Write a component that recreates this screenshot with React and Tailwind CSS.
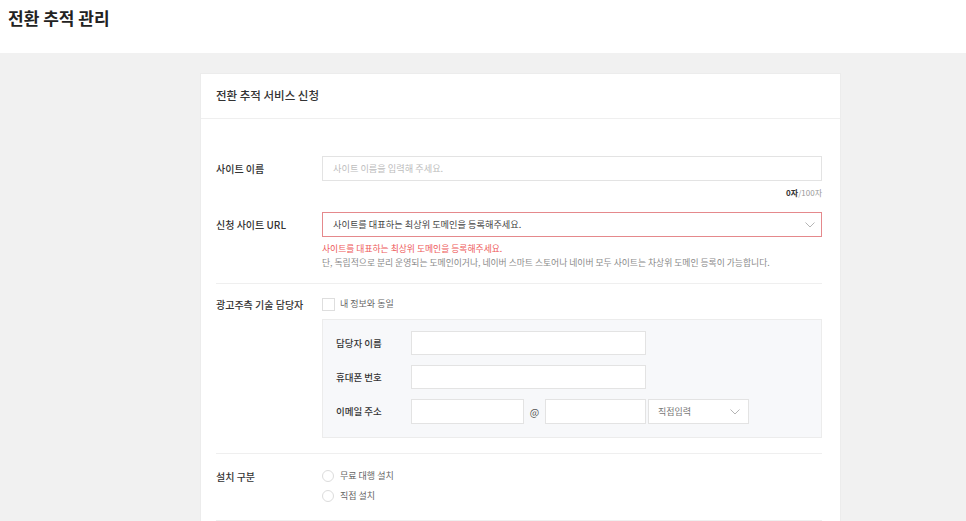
import React from "react";

const font = { fontFamily: '"Noto Sans CJK KR", "Noto Sans", sans-serif' };

function Chevron({ className = "" }) {
  return (
    <svg width="10" height="6" viewBox="0 0 10 6" className={className}>
      <polyline points="0.5,0.5 5,5 9.5,0.5" fill="none" stroke="#b5b5b5" strokeWidth="1" />
    </svg>
  );
}

function Label({ children }) {
  return (
    <div className="w-[106px] shrink-0 text-[10px] font-medium text-[#333]">{children}</div>
  );
}

function Radio({ children }) {
  return (
    <div className="flex h-[20px] items-center">
      <span className="mr-[6px] h-[12px] w-[12px] rounded-full border border-[#dcdcdc] bg-white" />
      <span className="text-[9px] text-[#666]">{children}</span>
    </div>
  );
}

export default function App() {
  return (
    <div className="min-h-[521px] bg-[#f1f1f1]" style={font}>
      <header className="h-[53px] bg-white pl-[8px] pt-[7px]">
        <h1 className="text-[17px] font-bold leading-[22px] text-[#222]">전환 추적 관리</h1>
      </header>

      <div className="pt-[20px]">
        <section className="ml-[200px] w-[641px] border border-[#ececec] bg-white">
          <div className="flex h-[45px] items-center border-b border-[#efefef] px-[15px]">
            <h2 className="text-[11.5px] font-medium text-[#333]">전환 추적 서비스 신청</h2>
          </div>

          <div className="pl-[15px] pr-[18px]">
            {/* 사이트 이름 */}
            <div className="mt-[37px] flex items-center">
              <Label>사이트 이름</Label>
              <div className="flex h-[25px] flex-1 items-center border border-[#e3e3e3] px-[10px] text-[9.2px] text-[#bdbdbd]">
                사이트 이름을 입력해 주세요.
              </div>
            </div>
            <div className="mt-[6px] text-right text-[8px] leading-[12px] text-[#999]">
              <span className="font-bold text-[#333]">0자</span>/100자
            </div>

            {/* 신청 사이트 URL */}
            <div className="mt-[13px] flex items-center">
              <Label>신청 사이트 URL</Label>
              <div className="flex h-[25px] flex-1 items-center justify-between border border-[#e5898c] pl-[10px] pr-[6px] text-[9.2px] text-[#444]">
                <span>사이트를 대표하는 최상위 도메인을 등록해주세요.</span>
                <Chevron />
              </div>
            </div>
            <div className="ml-[106px] mt-[5px] pb-[13px] text-[8.8px] leading-[14px]">
              <p className="text-[#ee5a5a]">사이트를 대표하는 최상위 도메인을 등록해주세요.</p>
              <p className="text-[#8a8a8a]">
                단, 독립적으로 분리 운영되는 도메인이거나, 네이버 스마트 스토어나 네이버 모두 사이트는 차상위 도메인 등록이 가능합니다.
              </p>
            </div>

            {/* 광고주측 기술 담당자 */}
            <div className="border-t border-[#efefef] pb-[15px] pt-[13px]">
              <div className="flex h-[14px] items-center">
                <Label>광고주측 기술 담당자</Label>
                <span className="mr-[5px] h-[13px] w-[13px] border border-[#dedede] bg-white" />
                <span className="text-[9px] text-[#666]">내 정보와 동일</span>
              </div>
              <div className="ml-[106px] mt-[8px] flex flex-col gap-[10px] border border-[#ececec] bg-[#f7f8fa] pb-[13px] pl-[13px] pt-[11px]">
                <div className="flex items-center">
                  <div className="w-[75px] text-[9.5px] font-medium text-[#333]">담당자 이름</div>
                  <div className="h-[24px] w-[235px] border border-[#e3e3e3] bg-white" />
                </div>
                <div className="flex items-center">
                  <div className="w-[75px] text-[9.5px] font-medium text-[#333]">휴대폰 번호</div>
                  <div className="h-[24px] w-[235px] border border-[#e3e3e3] bg-white" />
                </div>
                <div className="flex items-center">
                  <div className="w-[75px] text-[9.5px] font-medium text-[#333]">이메일 주소</div>
                  <div className="h-[25px] w-[113px] border border-[#e3e3e3] bg-white" />
                  <div className="w-[21px] text-center text-[10px] text-[#555]">@</div>
                  <div className="h-[25px] w-[101px] border border-[#e3e3e3] bg-white" />
                  <div className="ml-[2px] flex h-[25px] w-[101px] items-center justify-between border border-[#e3e3e3] bg-white pl-[9px] pr-[8px]">
                    <span className="text-[9px] text-[#777]">직접입력</span>
                    <Chevron />
                  </div>
                </div>
              </div>
            </div>

            {/* 설치 구분 */}
            <div className="flex border-t border-[#efefef] pb-[14px] pt-[12px]">
              <div className="flex h-[20px] items-center">
                <Label>설치 구분</Label>
              </div>
              <div className="flex flex-col">
                <Radio>무료 대행 설치</Radio>
                <Radio>직접 설치</Radio>
              </div>
            </div>
            <div className="border-t border-[#efefef]" />
          </div>
        </section>
      </div>
    </div>
  );
}
